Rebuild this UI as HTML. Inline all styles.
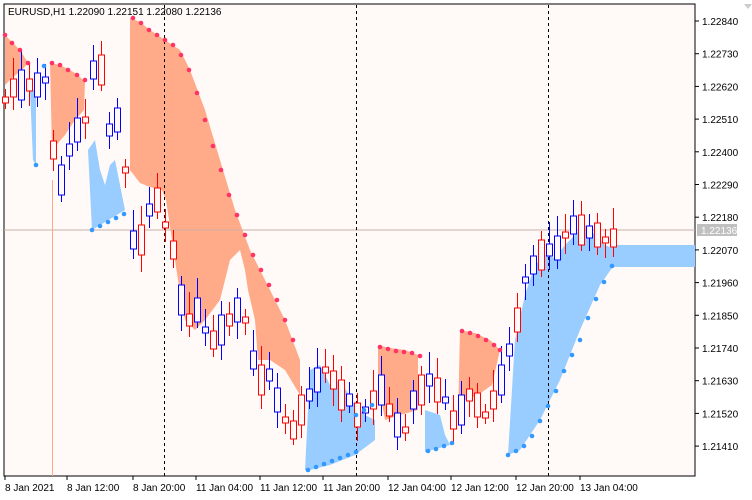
<!DOCTYPE html>
<html><head><meta charset="utf-8"><style>
html,body{margin:0;padding:0;background:#fff}
svg{display:block}
text{font-family:"Liberation Sans",sans-serif;font-size:10px;fill:#000}
</style></head><body>
<svg id="s" width="752" height="500" xmlns="http://www.w3.org/2000/svg">
<rect x="0" y="0" width="752" height="500" fill="#fff"/>
<rect x="4" y="4" width="691" height="472" fill="#fffaf8" stroke="#000" stroke-width="1"/>
<g fill="#ffaa88">
<polygon points="5,35 12,42 20,50 28,63 22,70 12,78 5,85"/>
<polygon points="50,63 60,65 70,70 78,75 85,82 84,110 75,120 65,135 52,150"/>
<polygon points="130,18 140,22 150,30 165,40 180,50 190,70 205,110 220,160 235,210 250,250 265,280 285,320 300,360 300,395 285,370 270,360 258,360 255,320 248,290 245,270 240,250 230,260 220,300 205,320 195,330 185,320 178,280 172,240 166,200 162,190 150,187 140,183 130,170"/>
<polygon points="378,345 390,348 405,350 418,355 418,410 400,415 385,420 378,380"/>
<polygon points="460,330 475,333 490,340 500,350 492,385 478,395 465,400 458,420"/>
</g>
<g fill="#99ccff">
<polygon points="30,90 36,90 36,165 33,160"/>
<polygon points="88,150 95,140 100,170 105,185 110,165 115,160 120,185 125,210 92,230"/>
<polygon points="305,470 310,370 320,365 330,385 340,380 355,405 365,415 375,420 375,440 355,455 330,465 310,470"/>
<polygon points="425,452 425,410 440,415 445,435 450,445"/>
<polygon points="508,455 515,340 525,295 535,265 545,255 555,258 565,245 575,235 585,225 595,235 605,245 612,248 612,268 600,285 580,330 560,380 540,420 520,450"/>
<rect x="612" y="245" width="83" height="22"/>
</g>
<line x1="4" y1="230" x2="695" y2="230" stroke="#c8b0a8" stroke-width="1"/>
<line x1="52.5" y1="180" x2="52.5" y2="476" stroke="#ffaa88"/>
<g stroke="#000" stroke-dasharray="3,3">
<line x1="164.5" y1="5" x2="164.5" y2="476"/>
<line x1="356.5" y1="5" x2="356.5" y2="476"/>
<line x1="548.5" y1="5" x2="548.5" y2="476"/>
</g>
<g id="c"></g>
<g id="d"></g>
<text x="8" y="15">EURUSD,H1  1.22090 1.22151 1.22080 1.22136</text>
<rect x="697" y="224" width="40" height="12" fill="#c0c0c0"/>
<g id="ax"></g>
<polygon points="744,4 752,4 748,9" fill="#ccc"/>
</svg>
<script>
var ns="http://www.w3.org/2000/svg";
function el(p,t,a,txt){var e=document.createElementNS(ns,t);for(var k in a)e.setAttribute(k,a[k]);if(txt)e.textContent=txt;document.getElementById(p).appendChild(e);return e;}
var labs=["1.22840","1.22730","1.22620","1.22510","1.22400","1.22290","1.22180","1.22070","1.21960","1.21850","1.21740","1.21630","1.21520","1.21410"];
labs.forEach(function(l,i){var y=21+i*32.7;el("ax","line",{x1:695,y1:y,x2:699,y2:y,stroke:"#000"});el("ax","text",{x:702,y:y+4},l);});
el("ax","text",{x:701,y:234,style:"fill:#fff"},"1.22136");
var tl=[[5,"8 Jan 2021"],[67,"8 Jan 12:00"],[133,"8 Jan 20:00"],[196,"11 Jan 04:00"],[260,"11 Jan 12:00"],[323,"11 Jan 20:00"],[388,"12 Jan 04:00"],[451,"12 Jan 12:00"],[516,"12 Jan 20:00"],[580,"13 Jan 04:00"]];
tl.forEach(function(t){el("ax","line",{x1:t[0],y1:476,x2:t[0],y2:480,stroke:"#000"});el("ax","text",{x:t[0],y:491},t[1]);});
var ys=[100,88,85,85,85,80,150,180,150,130,120,70,70,130,120,170,240,240,210,200,225,250,300,320,310,330,340,330,320,310,320,360,380,375,400,420,430,410,395,380,370,380,395,400,415,410,400,390,410,425,430,400,390,380,390,400,420,410,395,405,415,400,380,350,320,280,265,255,250,248,235,225,230,232,235,240,238];
var prev=ys[0];
ys.forEach(function(y,i){var x=5+i*8;var up=(i%3!=1)?(y<prev):(y>=prev);var h=6+((i*37)%5)*6;var t=y-h/2,b=y+h/2;var col=up?"#0000ff":"#ff0000";
el("c","line",{x1:x+0.5,y1:t-8-((i*13)%15),x2:x+0.5,y2:b+6+((i*7)%12),stroke:col});
el("c","rect",{x:x-2.5,y:t,width:6,height:h,fill:"#fffaf8",stroke:col});prev=y;});
var rd=[[5,35],[12,43],[20,50],[28,63],[52,63],[60,65],[68,70],[77,75],[85,80],[133,18],[141,23],[149,30],[157,35],[165,40],[173,45],[181,55],[189,70],[197,93],[205,120],[213,146],[221,170],[229,195],[237,215],[245,235],[253,255],[261,270],[269,285],[277,300],[285,320],[293,340],[380,347],[388,349],[396,351],[404,352],[412,353],[420,356],[462,331],[470,333],[478,336],[486,340],[494,345],[500,350]];
rd.forEach(function(p){el("d","circle",{cx:p[0],cy:p[1],r:2.3,fill:"#ff3366"});});
var bd=[[44,66],[36,165],[92,230],[100,226],[108,222],[116,218],[124,214],[308,470],[316,467],[324,464],[332,461],[340,458],[348,455],[356,452],[356,415],[364,410],[372,405],[428,451],[436,449],[444,446],[452,443],[508,455],[516,451],[524,446],[532,436],[540,421],[548,406],[556,391],[564,371],[572,355],[580,340],[588,318],[596,299],[604,282],[612,266]];
bd.forEach(function(p){el("d","circle",{cx:p[0],cy:p[1],r:2.3,fill:"#3399ff"});});
</script>
</body></html>
